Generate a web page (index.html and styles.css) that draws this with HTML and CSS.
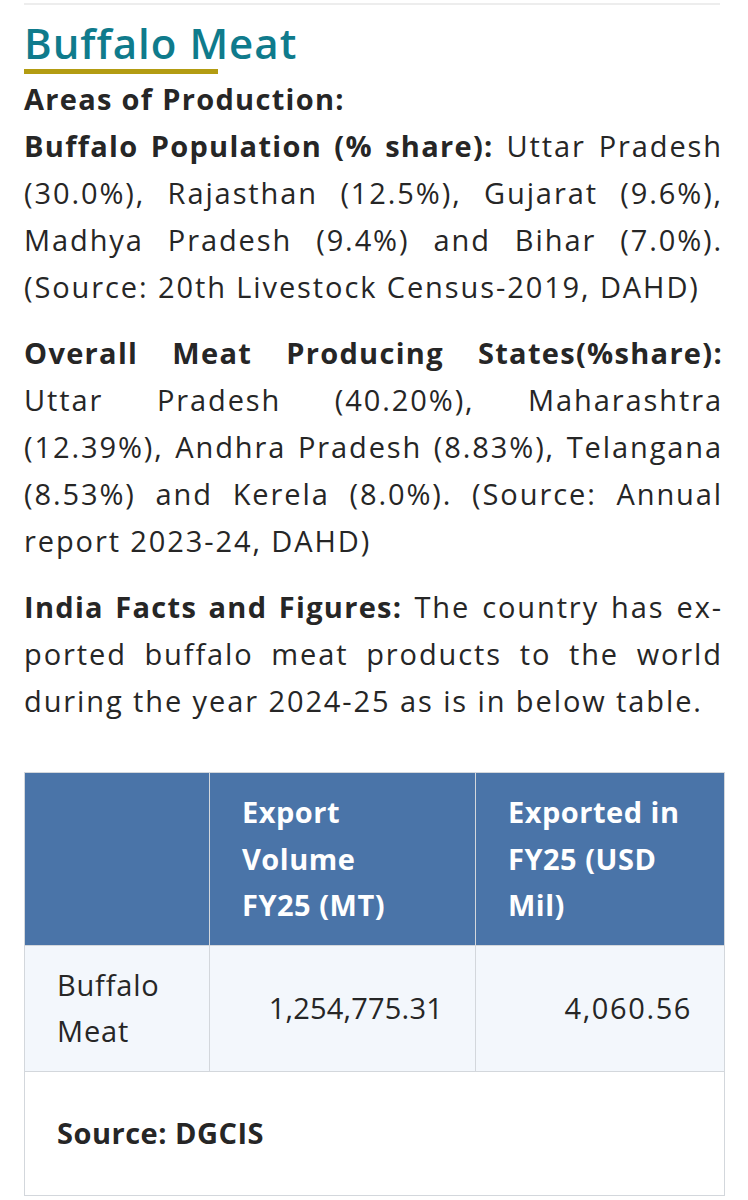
FILE: index.html
```html
<!DOCTYPE html>
<html>
<head>
<meta charset="utf-8">
<link rel="stylesheet" href="styles.css">
</head>
<body>
<div class="page">
  <div class="topline"></div>
  <h2 class="title">Buffalo Meat</h2>
  <div class="rule"></div>
  <p class="para first">
    <span class="ln last"><b>Areas of Production:</b></span>
    <span class="ln"><b>Buffalo Population (% share):</b> Uttar Pradesh</span>
    <span class="ln">(30.0%), Rajasthan (12.5%), Gujarat (9.6%),</span>
    <span class="ln">Madhya Pradesh (9.4%) and Bihar (7.0%).</span>
    <span class="ln last">(Source: 20th Livestock Census-2019, DAHD)</span>
  </p>
  <p class="para">
    <span class="ln"><b>Overall Meat Producing States(%share):</b></span>
    <span class="ln">Uttar Pradesh (40.20%), Maharashtra</span>
    <span class="ln">(12.39%), Andhra Pradesh (8.83%), Telangana</span>
    <span class="ln">(8.53%) and Kerela (8.0%). (Source: Annual</span>
    <span class="ln last">report 2023-24, DAHD)</span>
  </p>
  <p class="para">
    <span class="ln"><b>India Facts and Figures:</b> The country has ex-</span>
    <span class="ln">ported buffalo meat products to the world</span>
    <span class="ln last">during the year 2024-25 as is in below table.</span>
  </p>
  <table class="data">
    <colgroup>
      <col class="w1">
      <col class="w2">
      <col class="w3">
    </colgroup>
    <thead>
      <tr>
        <th></th>
        <th>Export<br>Volume<br>FY25 (MT)</th>
        <th>Exported in<br>FY25 (USD<br>Mil)</th>
      </tr>
    </thead>
    <tbody>
      <tr class="row">
        <td class="name">Buffalo<br>Meat</td>
        <td class="num">1,254,775.31</td>
        <td class="num">4,060.56</td>
      </tr>
      <tr class="foot">
        <td colspan="3"><b>Source: DGCIS</b></td>
      </tr>
    </tbody>
  </table>
</div>
</body>
</html>
```
FILE: styles.css
```css
html, body {
  margin: 0;
  padding: 0;
  background: #ffffff;
}
body {
  font-family: "Open Sans", "Noto Sans", sans-serif;
  color: #262626;
}
.page {
  width: 699px;
  padding: 3px 0 0 24px;
}
.topline {
  height: 2px;
  width: 696px;
  background: #ededed;
}
.title {
  margin: 13px 0 0 0;
  font-size: 42px;
  line-height: 50px;
  font-weight: 600;
  color: #0f7b8c;
  letter-spacing: 1px;
}
.rule {
  width: 194px;
  height: 5px;
  background: #b39c12;
  margin-top: 1px;
}
.para {
  margin: 0 0 19px 0;
  font-size: 29px;
  line-height: 47px;
  letter-spacing: 1.9px;
}
.para.first {
  margin-top: 1px;
}
.para b {
  font-weight: 700;
  letter-spacing: 1.3px;
}
.ln {
  display: block;
  text-align: justify;
  text-align-last: justify;
  white-space: nowrap;
}
.ln.last {
  text-align-last: left;
}
.data {
  margin-top: 48px;
  width: 700px;
  table-layout: fixed;
  border-collapse: collapse;
  font-size: 29px;
  line-height: 46.5px;
}
.w1 { width: 185px; }
.w2 { width: 266px; }
.w3 { width: 249px; }
.data th, .data td {
  border: 1.5px solid #d3d7dc;
}
.data th {
  background: #4a74a8;
  color: #ffffff;
  font-weight: 700;
  text-align: left;
  vertical-align: middle;
  padding: 16px 10px 16px 32px;
  letter-spacing: 0.5px;
}
.data .row td {
  background: #f3f7fc;
  padding: 16px 32px;
  vertical-align: middle;
  letter-spacing: 0.8px;
}
.data .row td.num:nth-child(2) {
  letter-spacing: 0.2px;
}
.data .row td.num:nth-child(3) {
  letter-spacing: 1.6px;
}
.data .name {
  text-align: left;
}
.data .num {
  text-align: right;
}
.data .foot td {
  padding: 38.5px 32px;
  background: #ffffff;
}
.data .foot b {
  font-weight: 700;
  letter-spacing: 0.5px;
}
```
